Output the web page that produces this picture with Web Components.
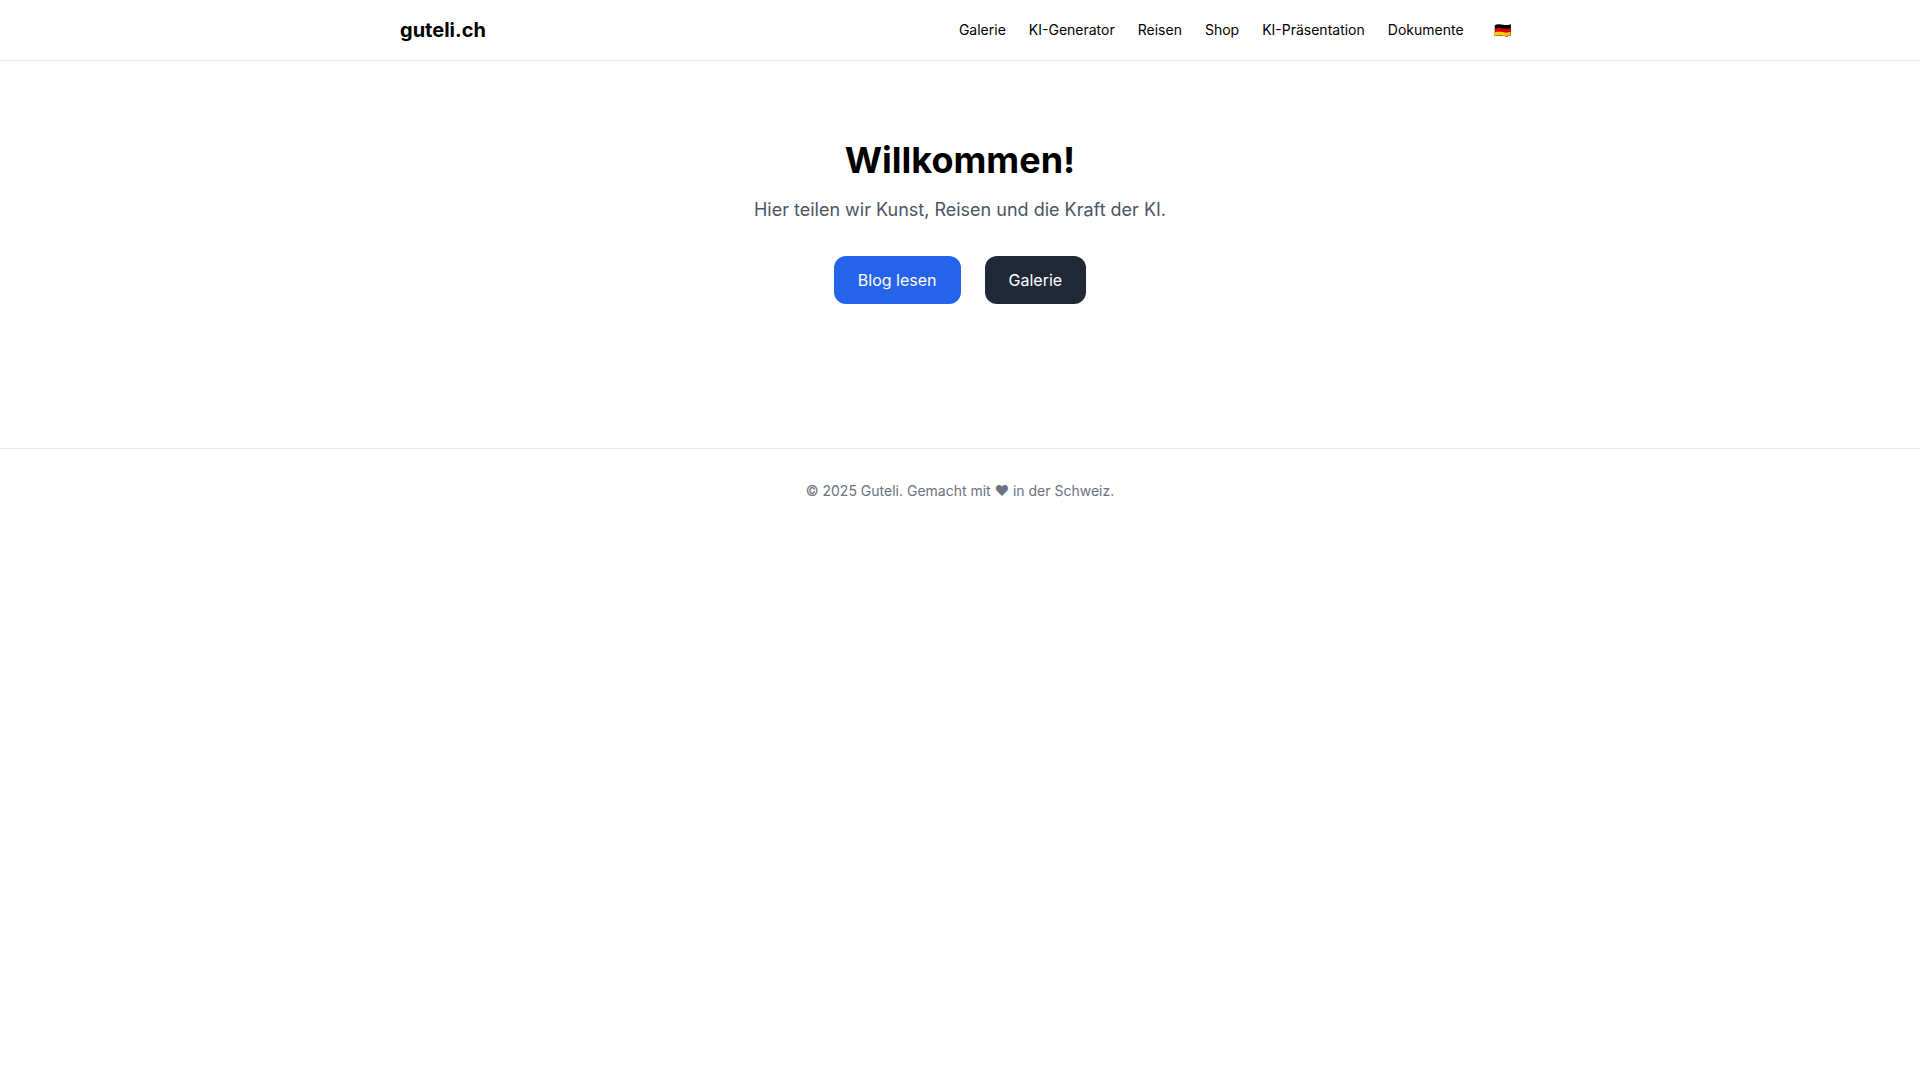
<!DOCTYPE html>
<html lang="de">
<head>
<meta charset="utf-8">
<meta name="viewport" content="width=device-width, initial-scale=1">
<title>guteli.ch</title>
<style>
body {
  margin: 0;
  background: #fff;
  color: #000;
  font: 16px/24px Inter, "Noto Color Emoji", sans-serif;
}
</style>
</head>
<body>
<site-header>
  <nav-link href="#galerie">Galerie</nav-link>
  <nav-link href="#ki-generator">KI-Generator</nav-link>
  <nav-link href="#reisen">Reisen</nav-link>
  <nav-link href="#shop">Shop</nav-link>
  <nav-link href="#ki-praesentation">KI-Präsentation</nav-link>
  <nav-link href="#dokumente">Dokumente</nav-link>
  <language-button slot="language">🇩🇪</language-button>
</site-header>
<welcome-hero>
  <span slot="title">Willkommen!</span>
  Hier teilen wir Kunst, Reisen und die Kraft der KI.
  <action-link slot="actions" href="#blog">Blog lesen</action-link>
  <action-link slot="actions" href="#galerie" class="dark">Galerie</action-link>
</welcome-hero>
<site-footer>© 2025 Guteli. Gemacht mit ❤ in der Schweiz.</site-footer>

<template id="site-header">
<style>
:host {
  display: block;
  border-bottom: 1px solid #e5e7eb;
}
header {
  display: flex;
  align-items: center;
  justify-content: space-between;
  box-sizing: border-box;
  max-width: 1152px;
  margin: 0 auto;
  padding: 16px;
}
.logo {
  color: inherit;
  font-size: 20px;
  font-weight: 700;
  line-height: 28px;
  text-decoration: none;
}
nav {
  display: flex;
  align-items: center;
  gap: 23px;
  font-size: 14px;
  line-height: 20px;
}
</style>
<header>
  <a class="logo" href="#">guteli.ch</a>
  <nav>
    <slot></slot>
    <slot name="language"></slot>
  </nav>
</header>
</template>

<template id="nav-link">
<style>
:host {
  display: block;
}
a {
  color: inherit;
  text-decoration: none;
}
a:hover {
  text-decoration: underline;
}
</style>
<a><slot></slot></a>
</template>

<template id="language-button">
<style>
:host {
  display: block;
}
button {
  display: block;
  padding: 4px 8px;
  border: 0;
  background: none;
  font: inherit;
  cursor: pointer;
}
</style>
<button type="button" aria-label="Sprache: Deutsch"><slot></slot></button>
</template>

<template id="welcome-hero">
<style>
:host {
  display: block;
  padding: 79px 16px 144px;
  text-align: center;
}
h1 {
  margin: 0 0 16px;
  font-size: 36px;
  font-weight: 700;
  line-height: 40px;
}
p {
  margin: 0 0 32px;
  color: #4b5563;
  font-size: 18px;
  line-height: 28px;
}
.actions {
  display: flex;
  flex-wrap: wrap;
  justify-content: center;
  gap: 24px;
}
</style>
<h1><slot name="title"></slot></h1>
<p><slot></slot></p>
<div class="actions"><slot name="actions"></slot></div>
</template>

<template id="action-link">
<style>
:host {
  display: block;
}
a {
  display: block;
  padding: 12px 24px;
  border-radius: 12px;
  background: #2563eb;
  color: #fff;
  text-decoration: none;
}
:host(.dark) a {
  background: #1f2937;
}
</style>
<a><slot></slot></a>
</template>

<template id="site-footer">
<style>
:host {
  display: block;
  padding: 32px 16px;
  border-top: 1px solid #e5e7eb;
  color: #6b7280;
  font-size: 14px;
  line-height: 20px;
  text-align: center;
}
</style>
<footer><slot></slot></footer>
</template>

<script>
class TemplateElement extends HTMLElement {
  constructor() {
    super();
    const template = document.getElementById(this.localName);
    this.attachShadow({ mode: "open" });
    this.shadowRoot.appendChild(template.content.cloneNode(true));
  }
}

// passes its href on to the inner link
class LinkElement extends TemplateElement {
  connectedCallback() {
    this.shadowRoot.querySelector("a").href = this.getAttribute("href");
  }
}

customElements.define("site-header", class extends TemplateElement {});
customElements.define("nav-link", class extends LinkElement {});
customElements.define("language-button", class extends TemplateElement {});
customElements.define("welcome-hero", class extends TemplateElement {});
customElements.define("action-link", class extends LinkElement {});
customElements.define("site-footer", class extends TemplateElement {});
</script>
</body>
</html>
